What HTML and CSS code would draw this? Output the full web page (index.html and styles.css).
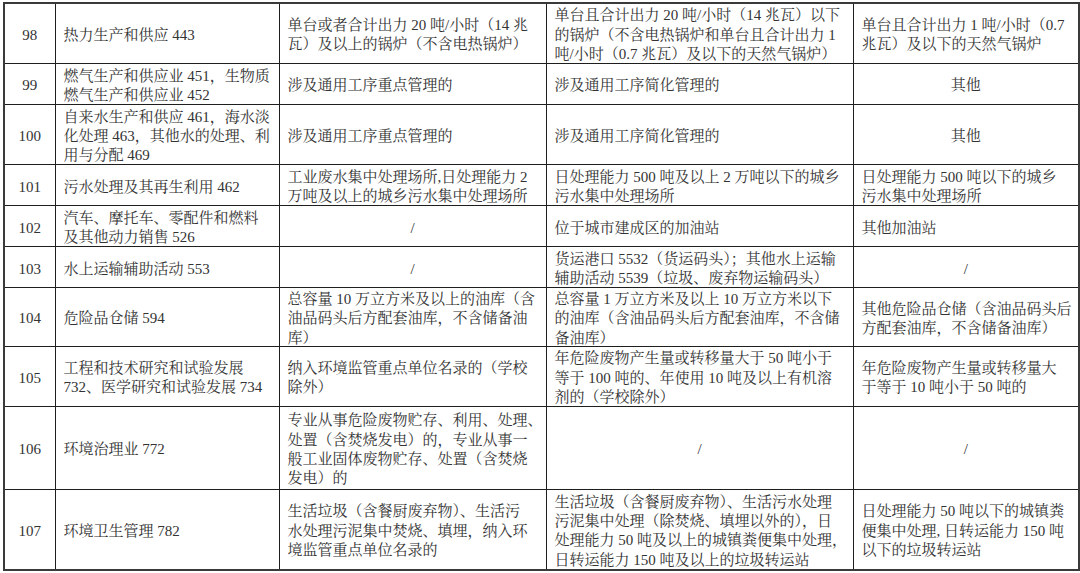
FILE: index.html
```html
<!DOCTYPE html>
<html lang="zh-CN">
<head>
<meta charset="utf-8">
<title>排污许可分类管理名录</title>
<link rel="stylesheet" href="styles.css">
</head>
<body>
<table class="grid">
  <colgroup>
    <col class="c-no">
    <col class="c-ind">
    <col class="c-key">
    <col class="c-simple">
    <col class="c-reg">
  </colgroup>
  <tbody>
    <tr class="r98">
      <td class="num"><span class="ln">98</span></td>
      <td><span class="ln">热力生产和供应 443</span></td>
      <td><span class="ln">单台或者合计出力 20 吨/小时（14 兆</span><span class="ln">瓦）及以上的锅炉（不含电热锅炉）</span></td>
      <td><span class="ln">单台且合计出力 20 吨/小时（14 兆瓦）以下</span><span class="ln">的锅炉（不含电热锅炉和单台且合计出力 1</span><span class="ln">吨/小时（0.7 兆瓦）及以下的天然气锅炉）</span></td>
      <td><span class="ln">单台且合计出力 1 吨/小时（0.7</span><span class="ln">兆瓦）及以下的天然气锅炉</span></td>
    </tr>
    <tr class="r99">
      <td class="num"><span class="ln">99</span></td>
      <td><span class="ln">燃气生产和供应业 451，生物质</span><span class="ln">燃气生产和供应业 452</span></td>
      <td><span class="ln">涉及通用工序重点管理的</span></td>
      <td><span class="ln">涉及通用工序简化管理的</span></td>
      <td class="mid"><span class="ln">其他</span></td>
    </tr>
    <tr class="r100">
      <td class="num"><span class="ln">100</span></td>
      <td><span class="ln">自来水生产和供应 461，海水淡</span><span class="ln">化处理 463，其他水的处理、利</span><span class="ln">用与分配 469</span></td>
      <td><span class="ln">涉及通用工序重点管理的</span></td>
      <td><span class="ln">涉及通用工序简化管理的</span></td>
      <td class="mid"><span class="ln">其他</span></td>
    </tr>
    <tr class="r101">
      <td class="num"><span class="ln">101</span></td>
      <td><span class="ln">污水处理及其再生利用 462</span></td>
      <td><span class="ln">工业废水集中处理场所,日处理能力 2</span><span class="ln">万吨及以上的城乡污水集中处理场所</span></td>
      <td><span class="ln">日处理能力 500 吨及以上 2 万吨以下的城乡</span><span class="ln">污水集中处理场所</span></td>
      <td><span class="ln">日处理能力 500 吨以下的城乡</span><span class="ln">污水集中处理场所</span></td>
    </tr>
    <tr class="r102">
      <td class="num"><span class="ln">102</span></td>
      <td><span class="ln">汽车、摩托车、零配件和燃料</span><span class="ln">及其他动力销售 526</span></td>
      <td class="mid"><span class="ln">/</span></td>
      <td><span class="ln">位于城市建成区的加油站</span></td>
      <td><span class="ln">其他加油站</span></td>
    </tr>
    <tr class="r103">
      <td class="num"><span class="ln">103</span></td>
      <td><span class="ln">水上运输辅助活动 553</span></td>
      <td class="mid"><span class="ln">/</span></td>
      <td><span class="ln">货运港口 5532（货运码头）；其他水上运输</span><span class="ln">辅助活动 5539（垃圾、废弃物运输码头）</span></td>
      <td class="mid"><span class="ln">/</span></td>
    </tr>
    <tr class="r104">
      <td class="num"><span class="ln">104</span></td>
      <td><span class="ln">危险品仓储 594</span></td>
      <td><span class="ln">总容量 10 万立方米及以上的油库（含</span><span class="ln">油品码头后方配套油库，不含储备油</span><span class="ln">库）</span></td>
      <td><span class="ln">总容量 1 万立方米及以上 10 万立方米以下</span><span class="ln">的油库（含油品码头后方配套油库，不含储</span><span class="ln">备油库）</span></td>
      <td><span class="ln">其他危险品仓储（含油品码头后</span><span class="ln">方配套油库，不含储备油库）</span></td>
    </tr>
    <tr class="r105">
      <td class="num"><span class="ln">105</span></td>
      <td><span class="ln">工程和技术研究和试验发展</span><span class="ln">732、医学研究和试验发展 734</span></td>
      <td><span class="ln">纳入环境监管重点单位名录的（学校</span><span class="ln">除外）</span></td>
      <td><span class="ln">年危险废物产生量或转移量大于 50 吨小于</span><span class="ln">等于 100 吨的、年使用 10 吨及以上有机溶</span><span class="ln">剂的（学校除外）</span></td>
      <td><span class="ln">年危险废物产生量或转移量大</span><span class="ln">于等于 10 吨小于 50 吨的</span></td>
    </tr>
    <tr class="r106">
      <td class="num"><span class="ln">106</span></td>
      <td><span class="ln">环境治理业 772</span></td>
      <td><span class="ln">专业从事危险废物贮存、利用、处理、</span><span class="ln">处置（含焚烧发电）的，专业从事一</span><span class="ln">般工业固体废物贮存、处置（含焚烧</span><span class="ln">发电）的</span></td>
      <td class="mid"><span class="ln">/</span></td>
      <td class="mid"><span class="ln">/</span></td>
    </tr>
    <tr class="r107">
      <td class="num"><span class="ln">107</span></td>
      <td><span class="ln">环境卫生管理 782</span></td>
      <td><span class="ln">生活垃圾（含餐厨废弃物）、生活污</span><span class="ln">水处理污泥集中焚烧、填埋，纳入环</span><span class="ln">境监管重点单位名录的</span></td>
      <td><span class="ln">生活垃圾（含餐厨废弃物）、生活污水处理</span><span class="ln">污泥集中处理（除焚烧、填埋以外的），日</span><span class="ln">处理能力 50 吨及以上的城镇粪便集中处理，</span><span class="ln">日转运能力 150 吨及以上的垃圾转运站</span></td>
      <td><span class="ln">日处理能力 50 吨以下的城镇粪</span><span class="ln">便集中处理, 日转运能力 150 吨</span><span class="ln">以下的垃圾转运站</span></td>
    </tr>
  </tbody>
</table>
</body>
</html>
```

FILE: styles.css
```css
html, body {
  margin: 0;
  padding: 0;
  background: #ffffff;
}

body {
  font-family: "Liberation Serif", "Noto Serif CJK SC", "Noto Sans CJK SC", serif;
  font-size: 15px;
  line-height: 19.3px;
  color: #333333;
}

.grid {
  margin: 2px 0 0 3px;
  width: 1075px;
  table-layout: fixed;
  border-collapse: collapse;
  border: 2px solid #3a3a3a;
}

.c-no { width: 51px; }
.c-ind { width: 224px; }
.c-key { width: 267px; }
.c-simple { width: 307px; }
.c-reg { width: 226px; }

.grid td {
  border: 1px solid #1e1e1e;
  padding: 0 6px 0 8px;
  vertical-align: middle;
  text-align: left;
  white-space: nowrap;
}

.grid td.num,
.grid td.mid {
  text-align: center;
  padding: 0;
}

/* each printed line keeps a fixed pitch; the taller line-height
   lowers the glyphs a little, as in the scanned document */
.ln {
  display: block;
  height: 19.3px;
  line-height: 23px;
}

.r98 { height: 60px; }
.r99 { height: 41.6px; }
.r100 { height: 60px; }
.r101 { height: 41.4px; }
.r102 { height: 41px; }
.r103 { height: 40.5px; }
.r104 { height: 58.7px; }
.r105 { height: 60px; }
.r106 { height: 83.3px; }
.r107 { height: 80px; }
```
